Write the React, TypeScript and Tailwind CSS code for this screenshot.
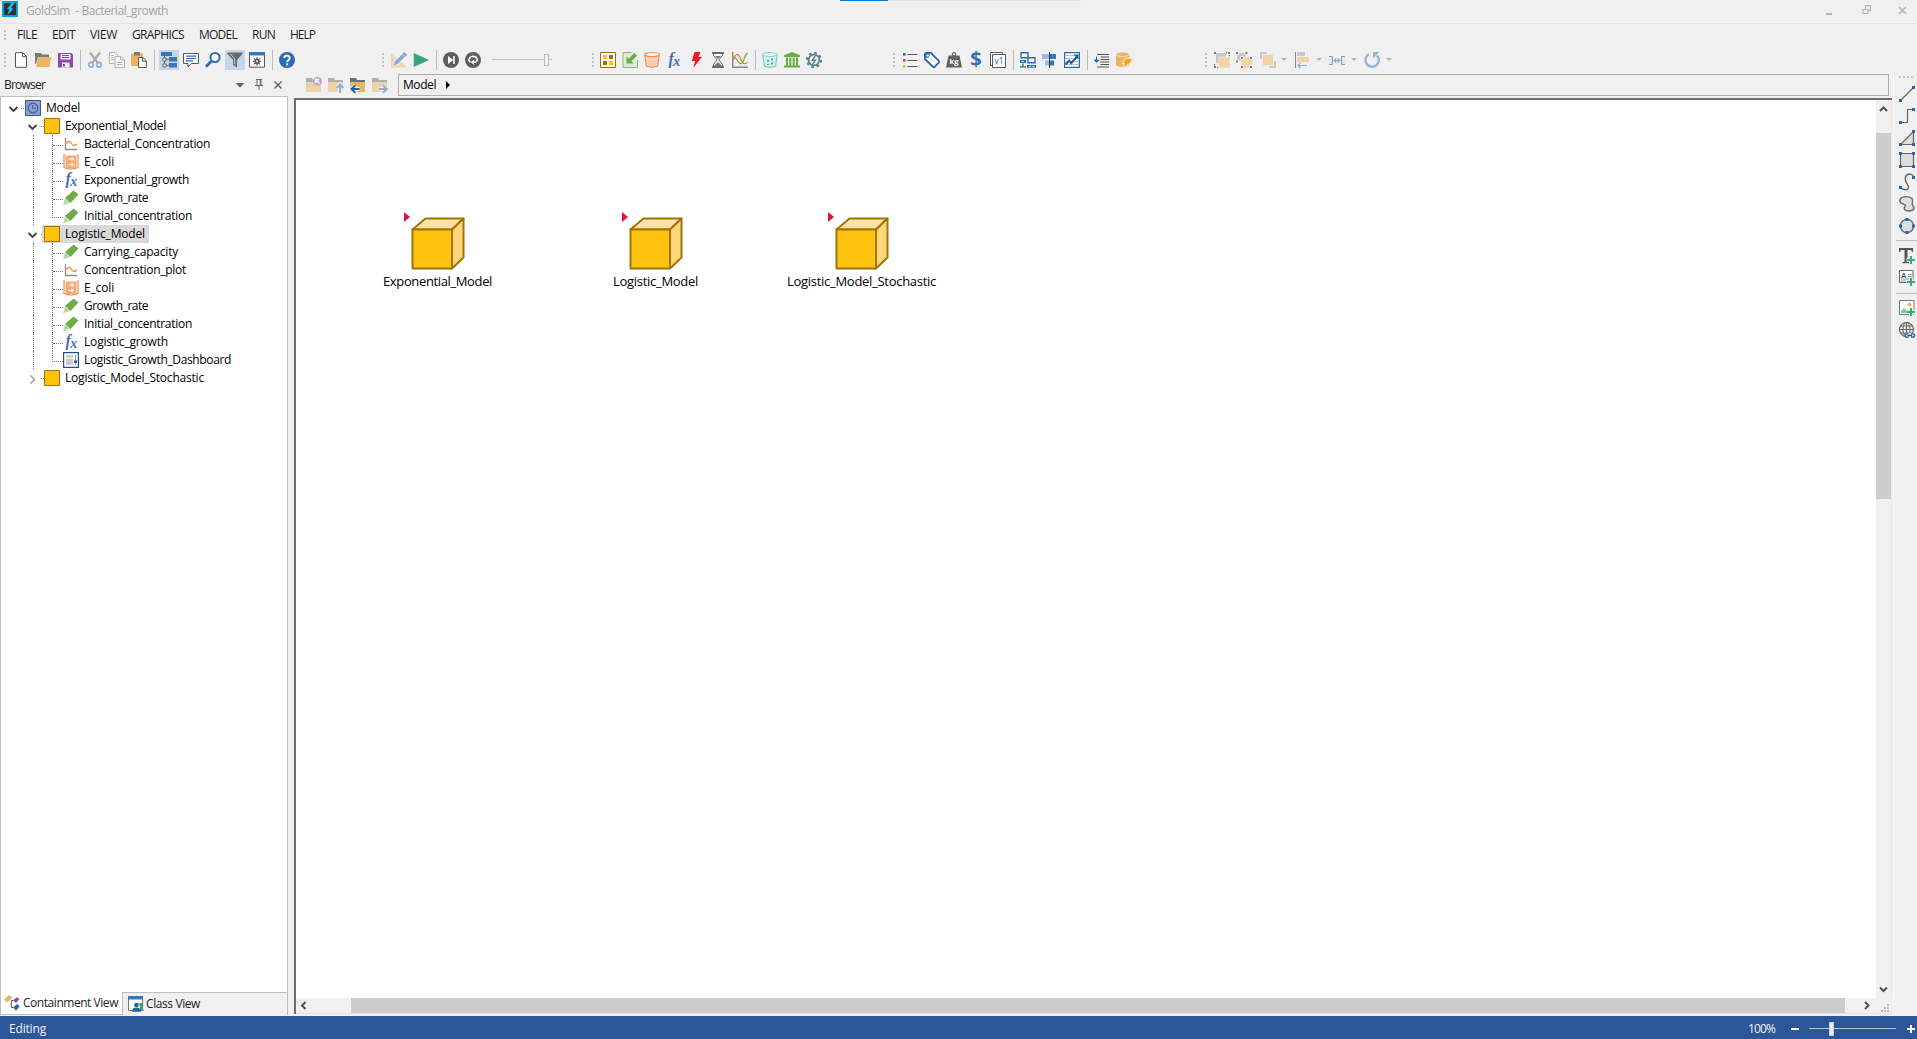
import React, { useLayoutEffect, useRef, useState } from "react";

/** Text whose tracking is tuned so that it occupies exactly `w` pixels. */
function Fit({ w, children, className = "" }: { w: number; children: string; className?: string }) {
  const ref = useRef<HTMLSpanElement>(null);
  const [spacing, setSpacing] = useState(0);
  useLayoutEffect(() => {
    if (ref.current) {
      setSpacing((w - ref.current.getBoundingClientRect().width) / children.length);
    }
  }, [w, children]);
  return (
    <span ref={ref} className={`inline-block shrink-0 whitespace-pre ${className}`} style={{ letterSpacing: `${spacing}px` }}>
      {children}
    </span>
  );
}

function Icon({ children, className = "" }: { children: React.ReactNode; className?: string }) {
  return (
    <svg viewBox="0 0 16 16" fill="none" className={`h-4 w-4 shrink-0 overflow-visible ${className}`}>
      {children}
    </svg>
  );
}

const BLUE = "#2b6cb0";
const GREY = "#595959";

const icons: Record<string, React.ReactNode> = {
  file: <path d="M2.5.7h7.3l3.7 3.8v10.8h-11zM9.5.7v4h4" fill="#fff" stroke="#555" />,
  folder: (
    <>
      <path d="M0 1h6l1 1.500h7V5H3L1 12H0z" fill="#7a7a7a" />
      <path d="M3.500 5H16l-1.500 10H1z" fill="#ebb461" />
    </>
  ),
  save: (
    <>
      <path d="M1 1h13.500l1.500 1.500v13H1z" fill="#8c4bab" />
      <path d="M3.500 2h10v5.500h-10zM5 10.500h7.500v5H5z" fill="#f5f0f8" />
      <path d="M5 3.500h7M5 5.500h7" stroke="#8c4bab" />
      <path d="M6 12h2v2.500H6z" fill="#8c4bab" />
    </>
  ),
  cut: (
    <>
      <path d="M3 .5 11 11M13 .5 5 11" stroke="#aaa" strokeWidth="2.200" />
      <circle cx="4" cy="12.800" r="2.300" stroke="#8fb3d9" strokeWidth="1.800" />
      <circle cx="12" cy="12.800" r="2.300" stroke="#8fb3d9" strokeWidth="1.800" />
    </>
  ),
  copy: (
    <g stroke="#b3b3b3">
      <path d="M.5.500H6l2.500 2.500v8.500h-8z" fill="#f6f6f6" />
      <path d="M6 4.500h6l3.500 3.300v7.700H6z" fill="#f6f6f6" />
      <path d="M11.500 4.500V8H15M2 3.500h3M2 5.500h3M2 7.500h3M8 10.500h5.500M8 12.500h5.500" />
    </g>
  ),
  paste: (
    <>
      <path d="M0 1.500h12V14H0z" fill="#ebb461" />
      <path d="M3 0h6v3.500H3z" fill="#7a7a7a" />
      <path d="M7.500 5.500H12l3.300 3.200v6.800H7.500zM11.500 5.500v3.700h3.500" fill="#fff" stroke={GREY} />
    </>
  ),
  tree: (
    <>
      <path d="M0 0h11v4H0zM8 5h8v4.500H8zM8 11h8v4.500H8z" fill="#3877b8" />
      <path d="M3.500 4v10M3.500 7.300H8M3.500 13.300H8" stroke="#666" />
      <path d="M2 6h3v3H2zM2 12h3v3H2z" fill="#fff" stroke="#666" />
    </>
  ),
  comment: (
    <>
      <path d="M.5 1.500h15v10H8.200L5 15v-3.500H.5z" fill="#fff" stroke={GREY} />
      <path d="M3 4.200h10M3 6.500h10M3 8.800h7" stroke={BLUE} strokeWidth="1.200" />
    </>
  ),
  search: (
    <>
      <circle cx="10" cy="5.500" r="4.600" fill="#fff" stroke={BLUE} strokeWidth="2" />
      <path d="M6.300 9.200 1 14.700" stroke={BLUE} strokeWidth="2.800" />
    </>
  ),
  filter: (
    <>
      <path d="M.5.500h15v1.600L10 8v7.500L6 13V8L.5 2.100z" fill="#6b6b6b" />
      <path d="M3.500 2 7.700 7v5.500" stroke="#ccc" />
    </>
  ),
  gearWindow: (
    <>
      <path d="M.5.500h15v14.700H.5z" fill="#fff" stroke={GREY} />
      <path d="M0 0h16v3.500H0z" fill="#3877b8" />
      <circle cx="8" cy="9.300" r="2.600" fill={GREY} />
      <path d="M8 5.200v8.200M3.900 9.300h8.200M5.100 6.400l5.800 5.800M10.900 6.400l-5.800 5.800" stroke={GREY} strokeWidth="1.300" />
      <circle cx="8" cy="9.300" r="1" fill="#fff" />
    </>
  ),
  help: (
    <>
      <circle cx="8" cy="8" r="8" fill={BLUE} />
      <path d="M5.300 6.100C5.300 2.700 10.900 2.800 10.800 6 10.700 8 8.200 8 8.200 10.200" stroke="#fff" strokeWidth="1.900" />
      <path d="M7.200 11.400h2v2h-2z" fill="#fff" />
    </>
  ),
  editMode: (
    <>
      <path d="M0 1.500v14h16z" fill="#efd5b0" />
      <path d="M3 7.500v5h5.500z" fill="#f0f0f0" />
      <path d="m2.300 13.700 1.200-4.200L11.300 1.700l3 3-7.800 7.800z" fill="#86abd2" stroke="#f0f0f0" strokeWidth=".7" />
      <path d="m12.300.7 3 3" stroke="#7da4cd" strokeWidth="2.200" />
    </>
  ),
  play: <path d="M.7 1 16 8 .7 15z" fill="#3ba287" />,
  step: (
    <>
      <circle cx="8" cy="8" r="8" fill="#5e5e5e" />
      <path d="m5 4 5.300 4L5 12z" fill="#fff" />
      <path d="M11 4v8" stroke="#fff" strokeWidth="1.600" />
    </>
  ),
  loop: (
    <>
      <circle cx="8" cy="8" r="8" fill="#5e5e5e" />
      <path d="M5.400 10.300C2.700 8 4 4.400 8 4.300c4.200 0 5.300 4 2.700 5.900H8" stroke="#fff" strokeWidth="1.500" />
      <path d="m9.200 7.400-3.400 2.800 3.400 2.700z" fill="#fff" />
    </>
  ),
  container: (
    <>
      <path d="M.5.500h15v15H.5z" fill="#fff" stroke="#94700f" />
      <path d="M3 3h4v4H3zM9 9h4v4H9z" fill="#fdbf12" />
      <path d="M9 3h4v4H9zM3 9h4v4H3z" fill="#a07508" />
    </>
  ),
  importBox: (
    <>
      <path d="M9.500.500H1v15h14.500V8" fill="#dfe9d8" stroke="#8db978" />
      <path d="M4.500 4.500v7h7L9.300 9.300 15 3.500l-2.600-2.600-5.700 5.800z" fill="#6aab41" />
    </>
  ),
  pot: (
    <>
      <path d="M.8 2.500 2.300 14.300q5.700 2.200 11.400 0L15.200 2.500" fill="#fbcdb0" stroke="#f28b4b" />
      <ellipse cx="8" cy="2.500" rx="7.300" ry="2" fill="#fff" stroke="#f28b4b" strokeWidth="1.200" />
    </>
  ),
  bolt: <path d="M6.500 0h6l-1.900 5H14L5.200 16l2-7H3.800z" fill="#ed1c24" />,
  hourglass: (
    <>
      <path d="M3.500 1v2.500L7.200 8l-3.700 4.500V15h9v-2.500L8.800 8l3.700-4.500V1z" fill="#fff" stroke="#666" />
      <path d="M2 1h12M2 15h12" stroke="#555" strokeWidth="1.700" />
      <path d="M5 4h6L8 7zM4 14l4-4 4 4z" fill="#777" />
    </>
  ),
  chart: (
    <>
      <path d="M.7 0v15.300H16" stroke="#888" strokeWidth="1.400" />
      <path d="M1.500 8C3 2 6 .5 8 5.500s4 8 7.500 5" stroke="#f0803c" strokeWidth="1.300" />
      <path d="M1.500 5.500C5 4 5.500 12.500 9 11.700S11.500 4 15.500.800" stroke="#72b04b" strokeWidth="1.300" />
    </>
  ),
  cell: (
    <>
      <path d="M.8 2.500 2.500 14.300q5.500 2.200 11 0L15.200 2.500" fill="#d5efee" stroke="#7eccc9" strokeWidth="1.200" />
      <ellipse cx="8" cy="2.500" rx="7.300" ry="1.900" fill="#f0fafa" stroke="#7eccc9" />
      <path d="M5 8h2v2H5zM9 6.500h2v2H9zM9 10.500h2v2H9zM5 12h2v1H5z" fill="#4aaea9" />
    </>
  ),
  bank: (
    <path d="M8 0 0 3.300V5h16V3.300zM2 5.500h2V14H2zM5.300 5.500h2V14h-2zM8.700 5.500h2V14h-2zM12 5.500h2V14h-2zM0 13.500h16v2H0z" fill="#6aab41" />
  ),
  reliability: (
    <g stroke="#5e8195">
      <circle cx="8" cy="8" r="5.400" strokeWidth="1.800" fill="#f0f0f0" />
      <circle cx="8" cy="8" r="7" strokeWidth="2.200" strokeDasharray="2.750 2.750" />
      <path d="m9.300 3.800-3 4.500h3.200l-3 4" strokeWidth="1.400" />
    </g>
  ),
  list: (
    <>
      <path d="M5.300 2.500h10.200M5.300 8.500h10.200M5.300 14.500h10.200" stroke="#555" strokeWidth="1.200" />
      <path d="M1 1h2.600v2.600H1z" fill={BLUE} />
      <path d="M1 7h2.600v2.600H1z" fill="#d2493a" />
      <path d="M1 13h2.600v2.600H1z" fill="#ebb461" />
    </>
  ),
  tag: (
    <>
      <path d="M.9 2 2 .9h5L15 9.200v1.300L10.500 15H9.200L.9 7z" fill="#fff" stroke={BLUE} strokeWidth="1.800" />
      <path d="M1 1h5L5 5.500 1 6z" fill={BLUE} />
      <path d="M2.600 2.600h2v2h-2z" fill="#fff" />
      <path d="m6 6 6 5.500" stroke="#9bb0c4" strokeDasharray="1 .6" />
    </>
  ),
  weight: (
    <>
      <circle cx="8" cy="2.300" r="1.700" stroke="#666" strokeWidth="1.200" />
      <path d="M2.500 3.500h11L16 15.500H0z" fill="#626262" />
      <text x="8" y="11.700" textAnchor="middle" fontSize="7.500" fontWeight="700" fill="#fff">kg</text>
    </>
  ),
  version: (
    <>
      <path d="M.5.500h12v13H.5z" fill="#fff" stroke={GREY} />
      <path d="M2.500 2.500h13v13h-13z" fill="#fff" stroke={GREY} />
      <text x="9.100" y="12.200" textAnchor="middle" fontSize="8.500" fill={BLUE}>v1</text>
    </>
  ),
  network: (
    <>
      <path d="M1 .7h7v5H1zM8 5.700h7v5H8z" fill="#fff" stroke={BLUE} strokeWidth="1.400" />
      <path d="M0 8h6v3H0zM7 13h9v2.800H7z" fill={BLUE} />
      <path d="M1.500 9.500h2M9 14.400h2M12.500 14.400h2" stroke="#fff" />
      <path d="M3 11.500v3M0 14.800h6" stroke="#579b80" strokeWidth="1.800" />
    </>
  ),
  align: (
    <>
      <path d="M0 2h8v5H0zM3 8.500h5v5H3z" fill="#9bb9ea" />
      <path d="M7.500 2H14v5H7.500zM7.500 8.500H12v5H7.500z" fill="#3877b8" />
      <path d="M7.500 0v16" stroke="#333" />
    </>
  ),
  trend: (
    <>
      <path d="M.6.600h14.800v14.800H.6z" fill="#fff" stroke={BLUE} strokeWidth="1.200" />
      <path d="M1 3.500h14M1 6.500h14M1 9.500h14M1 12.500h14" stroke="#9db8d2" strokeWidth=".8" />
      <path d="m1.500 12.500 3.800-3.800 2 2.500 6-7" stroke="#285a92" strokeWidth="2" />
      <path d="M9.500 2.600h5v5z" fill="#285a92" />
    </>
  ),
  indent: (
    <>
      <path d="M3 2.500h12M6.500 5h8.500M6.500 7.500h8.500M6.500 10h8.500M6.500 12.500h8.500M3 15h12" stroke="#505050" strokeWidth="1.100" />
      <path d="M2.500 4.500v5M.3 8l2.200 2.500L4.700 8z" stroke={BLUE} fill={BLUE} />
    </>
  ),
  database: (
    <>
      <path d="M0 2v11.500q6.700 3 13.300 0V2z" fill="#ebb461" />
      <ellipse cx="6.700" cy="2.300" rx="6.700" ry="2.200" fill="#ebb461" stroke="#f0f0f0" strokeWidth=".7" />
      <path d="M9.500 6.200H17l-1.800 2.500h2L6 16.800l2.500-5.300H6.200z" fill="#f5a623" stroke="#f0f0f0" />
    </>
  ),
  group: (
    <>
      <path d="M2 1h10v10H2z" fill="#c8c8c8" />
      <path d="M5 5h11v11H5z" fill="#f0d3a6" stroke="#f0f0f0" strokeWidth=".6" />
      <path d="M0 0h2v2H0zM12 0h1.200v1.200H12zM14 0h2v2h-2zM0 14h2v2H0zM14.800 3H16v1.200h-1.200zM0 12h1.200v1.200H0zM3 14.800h1.200V16H3z" fill="#7b7b7b" />
    </>
  ),
  ungroup: (
    <>
      <path d="M1 1h9v8H1z" fill="#c8c8c8" />
      <path d="M5 5h11v11H5z" fill="#f0d3a6" />
      <path d="M-.5-.500h3v3h-3zM9 -.500h3v3H9zM-.5 8h3v3h-3zM4.500 4.500h3v3h-3zM13.500 4.500h3v3h-3zM4.500 13.500h3v3h-3zM13.500 13.500h3v3h-3z" fill="#7b7b7b" stroke="#f0f0f0" />
    </>
  ),
  order: (
    <>
      <path d="M0 0h7v7H0zM9 9h7v7H9z" fill="#c8c8c8" />
      <path d="M2.500 2.500h11v11h-11z" fill="#f0d3a6" stroke="#f0f0f0" />
    </>
  ),
  alignLeft: (
    <>
      <path d="M.5 0v16" stroke="#8b8b8b" />
      <path d="M2 0h8v4H2z" fill="#c8c8c8" />
      <path d="M2 5h12v5H2z" fill="#f0d3a6" />
      <path d="M12 13.500H3M5.500 11 3 13.500 5.500 16" stroke="#8baccb" strokeWidth="1.200" />
    </>
  ),
  distribute: (
    <>
      <path d="M0 5h3v7H0zM13 5h3v7h-3z" fill="#d4e8f5" />
      <path d="M0 4.500h3.500v8H0M16 4.500h-3.500v8H16" stroke="#999" />
      <path d="M5 8.500h6" stroke="#8baccb" />
      <path d="m4.300 8.500 3-3v6zM11.700 8.500l-3-3v6z" fill="#8baccb" />
    </>
  ),
  rotate: (
    <>
      <path d="M4.800 2.200A6.700 6.700 0 1 0 13 3.500" stroke="#94b4d6" strokeWidth="2.400" />
      <path d="M9 0h6.500L9 6.500z" fill="#94b4d6" />
    </>
  ),
  fx: (
    <text x="2.500" y="12" fontFamily="Liberation Serif, serif" fontStyle="italic" fontWeight="700" fontSize="16" fill="#4670ba">
      f<tspan fontSize="14" dy="1.500" dx="-.5">x</tspan>
    </text>
  ),
  model: (
    <>
      <path d="M.5.500h15v15H.5z" fill="#8d9ccc" stroke="#3f5596" />
      <circle cx="8" cy="8" r="4.800" stroke="#3f5da0" strokeWidth="1.200" />
      <path d="M7.700 5v3.300h3" stroke="#3f5da0" />
    </>
  ),
  box: <path d="M.5.500h15v15H.5z" fill="#ffc20e" stroke="#9e7408" />,
  plot: (
    <>
      <path d="M2.500 2v11.500H14" stroke="#8f8f8f" strokeWidth="1.300" />
      <path d="M3.500 7.500c2-3.300 3.500-2.300 5 0s3 2.700 5.200.500" stroke="#f0803c" strokeWidth="1.300" />
    </>
  ),
  reservoir: (
    <>
      <path d="M1 0v13.500q7 3 14 0V0" stroke="#f28b4b" strokeWidth="1.200" />
      <path d="M2.500 1.500h11V13.500q-5.500 1.500-11 0z" fill="#f8a873" />
      <path d="M5.500 5h3.500M5.500 10.500h3.500" stroke="#fff" />
      <path d="M8.500 2.800v4.400L11.500 5zM8.500 8.300v4.400l3-2.200z" fill="#fff" />
    </>
  ),
  data: (
    <>
      <path d="M10.500.500 15.500 4.500 7.500 13 2 8z" fill="#6fac46" />
      <path d="M2 8 7 13 0 15.500z" fill="#bcd8a9" />
    </>
  ),
  dashboard: (
    <>
      <path d="M.6.600h14.800v14.800H.6z" fill="#fff" stroke="#244b8d" strokeWidth="1.200" />
      <path d="M3 3h7v2.500H3zM3 6.500h7V13H3z" fill="#ccc" />
      <path d="M12.500 3v10" stroke="#8795bd" />
      <path d="M11 8.500h3V11h-3z" fill="#33549b" />
    </>
  ),
  pin: <path d="M5 2.500h6M6 2.500v6M10 2.500v6M9.300 2.500v6M4 8.500h8M8 8.500V13" stroke="#666" />,
  caret: <path d="M3.500 6h9L8 10.500z" fill="#666" />,
  close: <path d="m4.500 4.500 7 7M11.500 4.500l-7 7" stroke="#666" strokeWidth="1.500" />,
};

const Fade = ({ children }: { children: React.ReactNode }) => <g opacity=".5">{children}</g>;
const NavFolder = () => (
  <>
    <path d="M0 1h6l1 2h8v3H0z" fill="#6f6f6f" />
    <path d="M0 5h15v10H0z" fill="#ebb461" />
  </>
);

function Item({ name, active = false }: { name: string; active?: boolean }) {
  return (
    <div className={`flex h-5 w-[22px] shrink-0 items-center justify-center ${active ? "bg-[#c7d5eb] bg-clip-content px-px" : ""}`}>
      <Icon>{icons[name]}</Icon>
    </div>
  );
}

function Items({ names }: { names: string[] }) {
  return <>{names.map((n) => <Item key={n} name={n} />)}</>;
}

const Sep = () => (
  <div className="flex h-5 w-2 shrink-0 justify-center">
    <div className="w-px bg-[#bdbdbd]" />
  </div>
);

function Grip({ n = 4, className = "" }: { n?: number; className?: string }) {
  return (
    <div className={`flex w-0.5 shrink-0 flex-col gap-0.5 ${className}`}>
      {Array.from({ length: n }, (_, i) => (
        <div key={i} className="h-0.5 w-0.5 bg-[#c2c2c2]" />
      ))}
    </div>
  );
}

const Drop = ({ className = "" }: { className?: string }) => (
  <div className={`h-0 w-0 shrink-0 border-x-[3px] border-t-[3px] border-x-transparent border-t-[#b5b5b5] ${className}`} />
);

function TitleBar() {
  return (
    <div className="relative flex h-6 shrink-0 items-center border-b border-[#e3e3e3] pb-px pl-0.5">
      <div className="absolute left-[840px] top-0 flex h-px">
        <div className="w-12 bg-[#0078d7]" />
        <div className="w-[193px] bg-[#e0e0e0]" />
      </div>
      <Icon className="-mt-1">
        <path d="M0 0h16v16H0z" fill="#06a4d8" />
        <path d="M2 2h12v12H2z" fill="#2f3136" />
        <path d="M10 2 5 7.700l2.200.800L5.400 14l6-6-2.200-.900L12.400 2z" fill="#21bdf0" />
      </Icon>
      <div className="ml-2 text-[#a5a5a5]">
        <Fit w={142}>{"GoldSim  - Bacterial_growth"}</Fit>
      </div>
      <div className="-mt-0.5 ml-auto mr-1 flex items-center gap-[21px]">
        <Icon><path d="M3 12h6" stroke="#b5b5b5" strokeWidth="2" /></Icon>
        <Icon>
          <path d="M3 7.500h5v4H3zM5.500 7.500V3.700h5v4.600H8" stroke="#b5b5b5" strokeWidth="1.200" />
        </Icon>
        <Icon><path d="m2 5 7 7M9 5l-7 7" stroke="#b5b5b5" strokeWidth="1.600" /></Icon>
      </div>
    </div>
  );
}

function MenuBar() {
  return (
    <div className="flex h-[23px] shrink-0 items-center pb-px pl-1 text-[#1e1e1e]">
      <Grip n={3} />
      <div className="ml-[11px] flex gap-[15px]">
        <Fit w={20}>FILE</Fit>
        <Fit w={23}>EDIT</Fit>
        <Fit w={27}>VIEW</Fit>
        <Fit w={52}>GRAPHICS</Fit>
        <Fit w={38}>MODEL</Fit>
        <Fit w={23}>RUN</Fit>
        <Fit w={25}>HELP</Fit>
      </div>
    </div>
  );
}

function ToolBar() {
  return (
    <div className="flex h-[25px] shrink-0 items-center pl-1">
      <Grip />
      <div className="ml-1 flex w-[377px] items-center">
        <Items names={["file", "folder", "save"]} />
        <Sep />
        <Items names={["cut", "copy", "paste"]} />
        <Sep />
        <Item name="tree" active />
        <Items names={["comment", "search"]} />
        <Item name="filter" active />
        <Item name="gearWindow" />
        <Sep />
        <Item name="help" />
      </div>
      <Grip className="-ml-[5px]" />
      <div className="ml-[4px] flex w-[204px] items-center">
        <Items names={["editMode", "play"]} />
        <Sep />
        <Items names={["step", "loop"]} />
        <div className="relative ml-2 h-3 w-[60px]">
          <div className="mt-[5px] h-px bg-[#c4c4c4]" />
          <div className="absolute left-[52px] top-0 h-3 w-[5px] border border-[#bdbdbd] bg-[#f0f0f0]" />
        </div>
      </div>
      <Grip />
      <div className="ml-[3px] flex w-[296px] items-center">
        <Items names={["container", "importBox", "pot", "fx", "bolt", "hourglass", "chart"]} />
        <Sep />
        <Items names={["cell", "bank", "reliability"]} />
      </div>
      <Grip />
      <div className="ml-1 flex w-[307px] items-center">
        <Items names={["list", "tag", "weight"]} />
        <div className="flex h-5 w-[22px] items-center justify-center pb-0.5 text-[20px] font-bold leading-none text-[#2f70b5] [font-family:'Noto_Sans',sans-serif]">
          $
        </div>
        <Item name="version" />
        <Sep />
        <Items names={["network", "align", "trend"]} />
        <Sep />
        <Items names={["indent", "database"]} />
      </div>
      <Grip className="-ml-px" />
      <div className="ml-1 flex items-center">
        <Items names={["group", "ungroup"]} />
        <div className="w-0.5" />
        <Item name="order" />
        <Drop className="ml-0.5" />
        <div className="w-[5px]" />
        <Item name="alignLeft" />
        <Drop className="ml-0.5" />
        <div className="w-1" />
        <Item name="distribute" />
        <Drop className="ml-[3px]" />
        <div className="w-1" />
        <Item name="rotate" />
        <Drop className="ml-[3px]" />
      </div>
    </div>
  );
}

type Node = { t: string; w: number; icon: string; lvl: 0 | 1 | 2; open?: boolean; last?: boolean; sel?: boolean };

const nodes: Node[] = [
  { t: "Model", w: 34, icon: "model", lvl: 0, open: true },
  { t: "Exponential_Model", w: 101, icon: "box", lvl: 1, open: true },
  { t: "Bacterial_Concentration", w: 126, icon: "plot", lvl: 2 },
  { t: "E_coli", w: 30, icon: "reservoir", lvl: 2 },
  { t: "Exponential_growth", w: 105, icon: "fx", lvl: 2 },
  { t: "Growth_rate", w: 64, icon: "data", lvl: 2 },
  { t: "Initial_concentration", w: 108, icon: "data", lvl: 2, last: true },
  { t: "Logistic_Model", w: 80, icon: "box", lvl: 1, open: true, sel: true },
  { t: "Carrying_capacity", w: 94, icon: "data", lvl: 2 },
  { t: "Concentration_plot", w: 102, icon: "plot", lvl: 2 },
  { t: "E_coli", w: 30, icon: "reservoir", lvl: 2 },
  { t: "Growth_rate", w: 64, icon: "data", lvl: 2 },
  { t: "Initial_concentration", w: 108, icon: "data", lvl: 2 },
  { t: "Logistic_growth", w: 84, icon: "fx", lvl: 2 },
  { t: "Logistic_Growth_Dashboard", w: 147, icon: "dashboard", lvl: 2, last: true },
  { t: "Logistic_Model_Stochastic", w: 139, icon: "box", lvl: 1 },
];

function Chevron({ open }: { open?: boolean }) {
  return (
    <Icon>
      {open ? (
        <path d="m4.500 7 4 4 4-4" stroke="#404040" strokeWidth="1.800" />
      ) : (
        <path d="m6.500 5.500 4 4-4 4" stroke="#a0a0a0" strokeWidth="1.600" />
      )}
    </Icon>
  );
}

function TreeRow({ n }: { n: Node }) {
  return (
    <div className="flex h-[18px] items-center">
      {n.lvl === 0 && (
        <>
          <div className="ml-1"><Chevron open /></div>
          <div className="mr-px mt-px w-[3px] border-t border-dotted border-[#777]" />
        </>
      )}
      {n.lvl === 1 && (
        <>
          <div className="ml-[23px]"><Chevron open={n.open} /></div>
          <div className="ml-px mt-px w-[3px] border-t border-dotted border-[#777]" />
        </>
      )}
      {n.lvl === 2 && (
        <>
          <div className="ml-8 h-[18px] w-[19px] border-l border-dotted border-[#777]" />
          <div className={`w-[11px] border-dotted border-[#777] ${n.last ? "h-[11px] self-start border-b border-l" : "h-[18px] border-l"}`}>
            <div className={n.last ? "" : "h-[11px] border-b border-dotted border-[#777]"} />
          </div>
        </>
      )}
      <div className={`flex h-[18px] items-center pr-1 ${n.sel ? "-ml-0.5 bg-[#d9d9d9] pl-0.5" : ""}`}>
        <Icon>{icons[n.icon]}</Icon>
        <div className="ml-[5px]">
          <Fit w={n.w}>{n.t}</Fit>
        </div>
      </div>
    </div>
  );
}

function Browser() {
  return (
    <div className="flex w-[288px] shrink-0 flex-col">
      <div className="flex h-[22px] items-center pl-1 text-[#1e1e1e]">
        <Fit w={41}>Browser</Fit>
        <div className="ml-auto flex gap-[3px] pr-0.5">
          <Icon>{icons.caret}</Icon>
          <Icon>{icons.pin}</Icon>
          <Icon>{icons.close}</Icon>
        </div>
      </div>
      <div className="flex flex-1 flex-col border border-b-0 border-[#bfbfbf] bg-white pt-0.5 text-black">
        {nodes.map((n, i) => <TreeRow key={i} n={n} />)}
      </div>
      <div className="flex h-[23px] bg-[#f0f0f0] text-[#1e1e1e]">
        <div className="flex w-[123px] items-center border-b border-l border-r border-[#bfbfbf] bg-white pl-[3px]">
          <Icon>
            <path d="M0 4.500 5 0l3.500 2.500-5.500 5z" fill="#ebb461" />
            <path d="m9 5.500 3.500-3.300L15.500 4 12 8z" fill="#8c4bab" />
            <path d="M7.300 5.500v7h2.500M7.300 5.500h2" stroke="#555" />
            <path d="m9 12.500 4-3.400 2.800 2.200L12 15.700z" fill={BLUE} />
          </Icon>
          <div className="ml-[3px]"><Fit w={95}>Containment View</Fit></div>
        </div>
        <div className="flex flex-1 items-center border-r border-t border-[#bfbfbf] pl-[5px]">
          <Icon>
            <path d="M.5.500h14v14H.5z" fill="#fff" stroke="#777" />
            <path d="M0 0h15v3.500H0z" fill="#3877b8" />
            <circle cx="12.700" cy="8.500" r="1.700" fill="#3ba287" />
            <path d="M12 10h2l2 4.500h-4z" fill="#3ba287" />
            <circle cx="8.500" cy="9" r="2.300" fill="#2261a4" />
            <path d="M4 15.800q.3-4.300 4.500-4.300t4.500 4.300z" fill="#2261a4" />
          </Icon>
          <div className="ml-0.5"><Fit w={54}>Class View</Fit></div>
        </div>
      </div>
    </div>
  );
}

function Breadcrumb() {
  return (
    <div className="flex h-6 shrink-0 items-start">
      <div className="flex gap-1.5 pl-3 pt-[3px]">
        <Icon>
          <Fade><NavFolder /></Fade>
          <circle cx="11.500" cy="4.300" r="4.500" fill="#c9a5d8" />
          <path d="M9.500 6V2.500H13M9.800 2.800l3.700 3.700" stroke="#fff" strokeWidth="1.300" />
        </Icon>
        <Icon>
          <Fade><NavFolder /></Fade>
          <path d="M12 16V8M8.500 11 12 7.500l3.500 3.500" stroke="#f0f0f0" strokeWidth="4" />
          <path d="M12 16V8M8.500 11 12 7.500l3.500 3.500" stroke="#8eafd1" strokeWidth="2" />
        </Icon>
        <Icon>
          <NavFolder />
          <path d="M9.500 12H2M5.300 8.300 1.500 12l3.800 3.700" stroke="#f0f0f0" strokeWidth="4" />
          <path d="M9.500 12H2M5.300 8.300 1.500 12l3.800 3.700" stroke="#2261a4" strokeWidth="2" />
        </Icon>
        <Icon>
          <Fade><NavFolder /></Fade>
          <path d="M7 12h7.500M11 8.300l3.800 3.700-3.800 3.700" stroke="#f0f0f0" strokeWidth="4" />
          <path d="M7 12h7.500M11 8.300l3.800 3.700-3.800 3.700" stroke="#8eafd1" strokeWidth="2" />
        </Icon>
      </div>
      <div className="ml-[10px] mr-1 flex h-[22px] flex-1 items-center border border-[#adadad] pl-1 text-black">
        <Fit w={33}>Model</Fit>
        <div className="ml-[10px] h-0 w-0 border-y-4 border-l-4 border-y-transparent border-l-black" />
      </div>
    </div>
  );
}

const cubes = [
  { t: "Exponential_Model", w: 109, pos: "left-[87px]" },
  { t: "Logistic_Model", w: 85, pos: "left-[317px]" },
  { t: "Logistic_Model_Stochastic", w: 149, pos: "left-[491px]" },
];

function Cube({ label, w }: { label: string; w: number }) {
  return (
    <div className="flex flex-col items-center">
      <svg viewBox="0 0 64 60" className="-ml-1.5 h-[60px] w-16">
        <path d="M1 0l6 5-6 5z" fill="#dc143c" />
        <g stroke="#a07508" strokeWidth="2" strokeLinejoin="round">
          <path d="M9.500 17.500 22.500 6.500h38L49 17.500z" fill="#ffe2a4" />
          <path d="m49 17.500 11.500-11v39L49 56.500z" fill="#ffd67a" />
          <path d="M9.500 17.500H49v39H9.500z" fill="#ffc20e" />
        </g>
      </svg>
      <div className="h-[18px] text-[13px] leading-[18px]">
        <Fit w={w}>{label}</Fit>
      </div>
    </div>
  );
}

function Canvas() {
  return (
    <div className="mr-px flex min-h-0 flex-1 flex-col border-l-2 border-t-2 border-[#6e6e6e] bg-white">
      <div className="flex min-h-0 flex-1">
        <div className="relative flex-1 text-black">
          {cubes.map((c) => (
            <div key={c.t} className={`absolute top-[112px] ${c.pos}`}>
              <Cube label={c.t} w={c.w} />
            </div>
          ))}
        </div>
        <div className="flex w-4 flex-col items-center border-r border-[#e8e8e8] bg-[#f0f0f0]">
          <div className="flex h-[33px]">
            <Icon><path d="m4 11 3.500-3.500L11 11" stroke="#505050" strokeWidth="2" /></Icon>
          </div>
          <div className="h-[366px] w-[15px] bg-[#cdcdcd]" />
          <div className="mt-auto">
            <Icon><path d="m4 5.500 3.500 3.500L11 5.500" stroke="#505050" strokeWidth="2" /></Icon>
          </div>
        </div>
      </div>
      <div className="flex h-4 border-b border-[#e3e3e3] bg-[#f0f0f0]">
        <div className="flex w-[55px]">
          <Icon><path d="M9.500 4 6 7.500 9.500 11" stroke="#505050" strokeWidth="2" /></Icon>
        </div>
        <div className="h-[15px] w-[1494px] bg-[#cdcdcd]" />
        <div className="ml-[14px] flex">
          <Icon><path d="m6 4 3.500 3.500L6 11" stroke="#505050" strokeWidth="2" /></Icon>
          <Icon className="-mr-[6px] ml-[5px]">
            <path d="M7 6h2v2H7zM4 9h2v2H4zM7 9h2v2H7zM1 12h2v2H1zM4 12h2v2H4zM7 12h2v2H7z" fill="#bdbdbd" />
          </Icon>
        </div>
      </div>
    </div>
  );
}

const Pts = ({ d }: { d: string }) => <path d={d} fill="#2666ad" />;

function DrawBar() {
  return (
    <div className="flex w-6 shrink-0 flex-col border-l border-[#fafafa] pt-0.5">
      <div className="ml-[5px] flex w-[14px] gap-0.5">
        {[0, 1, 2, 3].map((i) => <div key={i} className="h-0.5 w-0.5 bg-[#c2c2c2]" />)}
      </div>
      <div className="ml-[5px] mt-[8px] flex flex-col gap-1.5">
        <Icon><path d="M1.500 14.500 14.500 1.500" stroke="#666" strokeWidth="1.200" /><Pts d="M0 13h3v3H0zM13 0h3v3h-3z" /></Icon>
        <Icon><path d="M1.500 14.500h7v-13h6" stroke="#666" strokeWidth="1.200" /><Pts d="M0 13h3v3H0zM13 0h3v3h-3z" /></Icon>
        <Icon><path d="M1.500 14.500 14.500 1.500v13z" fill="#ddd" stroke="#666" strokeWidth="1.200" /><Pts d="M0 13h3v3H0zM13 0h3v3h-3zM13 13h3v3h-3z" /></Icon>
        <Icon><path d="M1.500 1.500h13v13h-13z" fill="#ddd" stroke="#666" strokeWidth="1.200" /><Pts d="M0 13h3v3H0zM13 0h3v3h-3zM13 13h3v3h-3zM0 0h3v3H0z" /></Icon>
        <Icon><path d="M1.500 13.500C5 17 10 16 9.500 13S5 7 6.500 3s6-4 8-.5" stroke="#666" strokeWidth="1.400" /><Pts d="M0 12h3v3H0zM13 2h3v3h-3z" /></Icon>
        <Icon><path d="M2 2C5-.3 11 .5 13 2.500S11.500 8 14 10s.5 5-4 5-6-2-4-4.500S3 8.500 1.500 6.500 1 3 2 2z" fill="#ddd" stroke="#666" strokeWidth="1.300" /></Icon>
        <Icon><circle cx="8" cy="8" r="6.600" fill="#ddd" stroke="#666" strokeWidth="1.300" /><Pts d="M6.500 0h3v3h-3zM6.500 13h3v3h-3zM0 6.500h3v3H0zM13 6.500h3v3h-3z" /></Icon>
      </div>
      <div className="mt-[6px] h-px w-[21px] self-end bg-[#bdbdbd]" />
      <div className="ml-[5px] mt-[7px] flex flex-col gap-1.5">
        <Icon>
          <path d="M0 0h14v4h-1l-1-2H8.500v11.500l2 .7v1H3.500v-1l2-.7V2H2L1 4H0z" fill="#555" />
          <path d="M12 7.500v9M7.500 12h9" stroke="#f0f0f0" strokeWidth="4" />
          <path d="M12 8v8M8 12h8" stroke="#3bab7f" strokeWidth="2" />
        </Icon>
        <Icon>
          <path d="M.5.500h13.500v12H.5z" fill="#fff" stroke="#666" />
          <text x="2" y="7.500" fontSize="7.500" fontWeight="700" fill="#2666ad">A</text>
          <path d="M9 4.500h4M9 6.500h4M2 9h10M2 11h5" stroke="#777" strokeWidth=".8" />
          <path d="M12 7.500v9M7.500 12h9" stroke="#f0f0f0" strokeWidth="4" />
          <path d="M12 8v8M8 12h8" stroke="#3bab7f" strokeWidth="2" />
        </Icon>
      </div>
      <div className="mt-[7px] h-px w-[21px] self-end bg-[#bdbdbd]" />
      <div className="ml-[5px] mt-[6px] flex flex-col gap-1.5">
        <Icon>
          <path d="M.5.500H15v14H.5z" fill="#fff" stroke="#777" />
          <circle cx="10.500" cy="4.500" r="2" fill="#ebb461" />
          <path d="M2 13v-2l3-3 3 3 2-1 3 3z" fill="#7cc5a2" />
          <path d="M12 8v8M8 12h8" stroke="#fff" strokeWidth="4" />
          <path d="M12 8v8M8 12h8" stroke="#3bab7f" strokeWidth="2" />
        </Icon>
        <Icon>
          <g stroke="#666">
            <circle cx="7.500" cy="7.500" r="7" strokeWidth="1.200" />
            <ellipse cx="7.500" cy="7.500" rx="3.500" ry="7" />
            <path d="M.5 7.500h14M1.500 4h12M1.500 11h12M7.500 0v15" />
          </g>
          <rect x="5.500" y="11" width="10.500" height="5" rx="2.500" fill="#f0f0f0" />
          <path d="M9.500 11.800H8q-2 0-2 1.700t2 1.700h1.500M12 11.800h1.500q2 0 2 1.700t-2 1.700H12M8.500 13.500h4.500" stroke="#234f9e" strokeWidth="1.300" />
        </Icon>
      </div>
    </div>
  );
}

function StatusBar() {
  return (
    <div className="flex h-[23px] shrink-0 items-center bg-[#2b579a] pt-0.5 text-[#f2f2f2]">
      <div className="ml-[9px]"><Fit w={37}>Editing</Fit></div>
      <div className="ml-auto"><Fit w={27}>100%</Fit></div>
      <div className="ml-4 h-0.5 w-2 bg-white" />
      <div className="relative ml-[10px] h-3.5 w-[87px]">
        <div className="mt-1.5 h-px bg-[#b9c0ca]" />
        <div className="absolute left-5 top-0 h-3.5 w-[5px] border border-[#c9c9c9] bg-[#f0f0f0]" />
      </div>
      <Icon className="-mr-[5px] ml-[10px]"><path d="M5 4v8M1 8h8" stroke="#fff" strokeWidth="2" /></Icon>
    </div>
  );
}

export default function App() {
  return (
    <div className="flex h-[1039px] w-[1917px] flex-col overflow-hidden bg-[#f0f0f0] text-[12px] leading-4 [font-family:'Open_Sans','Noto_Sans',sans-serif]">
      <TitleBar />
      <MenuBar />
      <ToolBar />
      <div className="flex min-h-0 flex-1 pt-0.5">
        <div className="flex min-w-0 flex-1">
          <div className="flex pb-px">
            <Browser />
          </div>
          <div className="ml-[6px] flex min-w-0 flex-1 flex-col pb-0.5">
            <Breadcrumb />
            <Canvas />
          </div>
        </div>
        <DrawBar />
      </div>
      <StatusBar />
    </div>
  );
}
